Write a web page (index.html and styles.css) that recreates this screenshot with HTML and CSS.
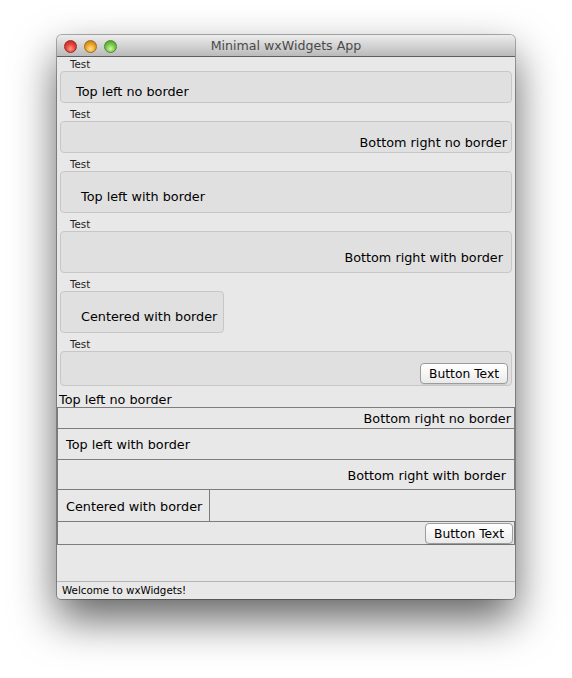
FILE: index.html
```html
<!DOCTYPE html>
<html>
<head>
<meta charset="utf-8">
<title>Minimal wxWidgets App</title>
<link rel="stylesheet" href="styles.css">
</head>
<body>
<div class="stage">
  <div class="window">
    <div class="titlebar">
      <div class="lights">
        <span class="light red"></span>
        <span class="light yellow"></span>
        <span class="light green"></span>
      </div>
      <div class="title">Minimal wxWidgets App</div>
      <div></div>
    </div>

    <div class="groups">
      <div class="group">
        <div class="label">Test</div>
        <div class="box b1"><span>Top left no border</span></div>
      </div>
      <div class="group">
        <div class="label">Test</div>
        <div class="box b2"><span>Bottom right no border</span></div>
      </div>
      <div class="group">
        <div class="label">Test</div>
        <div class="box b3"><span>Top left with border</span></div>
      </div>
      <div class="group">
        <div class="label">Test</div>
        <div class="box b4"><span>Bottom right with border</span></div>
      </div>
      <div class="group">
        <div class="label">Test</div>
        <div class="box b5"><span>Centered with border</span></div>
      </div>
      <div class="group">
        <div class="label">Test</div>
        <div class="box b6"><button class="btn">Button Text</button></div>
      </div>
    </div>

    <div class="plain">Top left no border</div>
    <div class="sunken sa"><span>Bottom right no border</span></div>
    <div class="sunken sb"><span>Top left with border</span></div>
    <div class="sunken sc"><span>Bottom right with border</span></div>
    <div class="sunken sd"><span>Centered with border</span></div>
    <div class="sunken se"><button class="btn">Button Text</button></div>
    <div class="filler"></div>
    <div class="status">Welcome to wxWidgets!</div>
  </div>
</div>
</body>
</html>
```

FILE: styles.css
```css
html, body {
  margin: 0;
  padding: 0;
}
body {
  width: 572px;
  height: 678px;
  overflow: hidden;
  background: #ffffff;
  font-family: "DejaVu Sans", "Liberation Sans", sans-serif;
  color: #000;
}
.stage {
  padding: 35px 0 0 57px;
}
.window {
  width: 458px;
  height: 564px;
  display: flex;
  flex-direction: column;
  background: #e8e8e8;
  border-radius: 5px 5px 4px 4px;
  overflow: hidden;
  box-shadow: 0 0 0 1px rgba(0, 0, 0, 0.3), 0 20px 44px rgba(0, 0, 0, 0.62);
}
.titlebar {
  height: 21px;
  flex: none;
  border-bottom: 1px solid #5e5e5e;
  background: linear-gradient(#ededed, #d6d6d6 45%, #bababa);
  display: grid;
  grid-template-columns: 1fr auto 1fr;
  align-items: center;
}
.lights {
  display: flex;
  gap: 7px;
  padding-left: 7px;
  padding-top: 1px;
}
.light {
  width: 13px;
  height: 13px;
  border-radius: 50%;
  box-sizing: border-box;
}
.red {
  background: radial-gradient(circle at 50% 70%, #ff9a8a 0%, #e8463c 45%, #b0241c 100%);
  border: 1px solid #9a2a22;
}
.yellow {
  background: radial-gradient(circle at 50% 70%, #ffe48e 0%, #f0a72f 45%, #b07012 100%);
  border: 1px solid #9d6a1c;
}
.green {
  background: radial-gradient(circle at 50% 70%, #cef7a8 0%, #7ccb50 45%, #42901f 100%);
  border: 1px solid #4a8a2c;
}
.title {
  font-size: 12.6px;
  line-height: 21px;
  color: #4a4a4a;
}

.groups {
  display: flex;
  flex-direction: column;
  gap: 4px;
}
.label {
  height: 14px;
  line-height: 14px;
  font-size: 10.3px;
  padding-left: 13px;
  color: #222;
}
.box {
  margin: 0 3px;
  box-sizing: border-box;
  border: 1px solid #c7c7c7;
  border-radius: 4px;
  background: #e0e0e0;
  display: flex;
  font-size: 12.8px;
  line-height: 16px;
}
.b1 {
  height: 32px;
  padding: 12px 0 0 15px;
}
.b2 {
  height: 32px;
  justify-content: flex-end;
  align-items: flex-end;
  padding: 0 4px 1px 0;
}
.b3 {
  height: 42px;
  padding: 17px 0 0 20px;
}
.b4 {
  height: 42px;
  justify-content: flex-end;
  align-items: flex-end;
  padding: 0 8px 6px 0;
}
.b5 {
  height: 42px;
  width: 164px;
  padding: 17px 0 0 20px;
}
.b6 {
  height: 35px;
  justify-content: flex-end;
  align-items: flex-end;
  padding: 0 3px 1px 0;
}

.btn {
  height: 21px;
  box-sizing: border-box;
  margin: 0;
  padding: 1px 8px 0;
  border: 1px solid #9c9c9c;
  border-radius: 4px;
  background: linear-gradient(#ffffff, #f6f6f6 50%, #e9e9e9);
  font-family: "DejaVu Sans", "Liberation Sans", sans-serif;
  font-size: 12.3px;
  line-height: 18px;
  color: #000;
  box-shadow: 0 1px 0 rgba(0, 0, 0, 0.08);
}

.plain {
  margin-top: 5px;
  height: 16px;
  box-sizing: border-box;
  padding-top: 1px;
  line-height: 16px;
  font-size: 12.8px;
  padding-left: 2px;
}
.sunken {
  box-sizing: border-box;
  border: 1px solid #7c7c7c;
  margin-top: -1px;
  display: flex;
  font-size: 12.8px;
  line-height: 16px;
  background: #e8e8e8;
}
.sa {
  margin-top: 0;
  height: 22px;
  justify-content: flex-end;
  align-items: flex-end;
  padding: 0 3px 1px 0;
}
.sb {
  height: 32px;
  padding: 8px 0 0 8px;
}
.sc {
  height: 31px;
  justify-content: flex-end;
  align-items: flex-end;
  padding: 0 8px 5px 0;
}
.sd {
  height: 33px;
  width: 153px;
  padding: 9px 0 0 8px;
}
.se {
  height: 24px;
  justify-content: flex-end;
  align-items: flex-start;
  padding: 1px 1px 0 0;
}
.filler {
  flex: 1;
}
.status {
  flex: none;
  height: 18px;
  box-sizing: border-box;
  border-top: 1px solid #b4b4b4;
  font-size: 10.3px;
  line-height: 17px;
  padding-left: 5px;
}
```
